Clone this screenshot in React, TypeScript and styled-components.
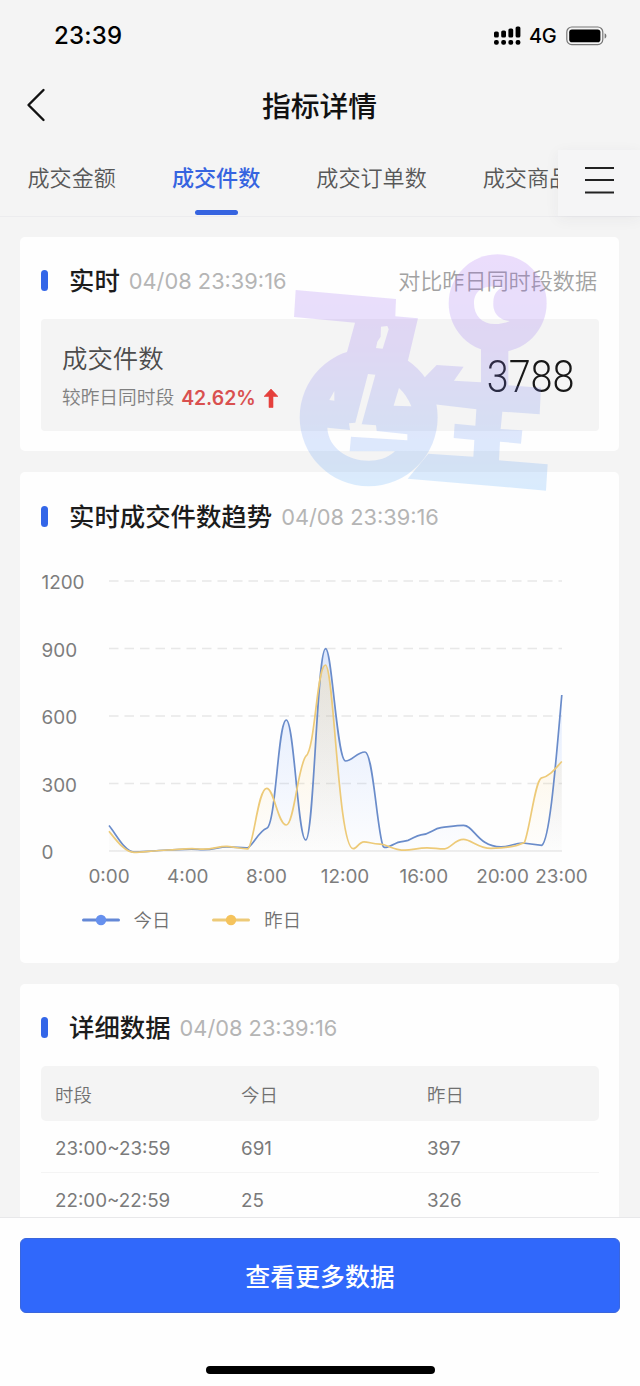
import React from "react";
import styled, { createGlobalStyle } from "styled-components";

const GlobalStyle = createGlobalStyle`
  * { box-sizing: border-box; }
  body {
    margin: 0;
    background: #f4f4f4;
    font-family: Inter, "Noto Sans CJK SC", sans-serif;
    color: #1c1c1c;
  }
`;

const Page = styled.div`
  width: 640px;
  height: 1386px;
  display: flex;
  flex-direction: column;
  overflow: hidden;
  background: #f4f4f4;
`;

const StatusBar = styled.div`
  flex: none;
  height: 71px;
  padding: 0 33px 0 54px;
  display: flex;
  align-items: center;
  justify-content: space-between;
  color: #000;
`;

const Clock = styled.span`
  font-size: 24px;
  font-weight: 550;
  line-height: 30px;
  letter-spacing: 0.2px;
`;

const StatusIcons = styled.div`
  display: flex;
  align-items: center;
`;

const Network = styled.span`
  margin: 0 9px 0 8px;
  width: 28px;
  font-size: 20px;
  line-height: 24px;
  font-weight: 450;
  letter-spacing: -0.3px;
`;

const NavBar = styled.div`
  flex: none;
  height: 71px;
  padding: 0 26px;
  display: grid;
  grid-template-columns: 40px 1fr 40px;
  align-items: center;
  text-align: center;
`;

const BackIcon = styled.svg`
  margin-bottom: 3px;
`;

const NavTitle = styled.h1`
  margin: 1px 1px 0 0;
  font-size: 28.8px;
  line-height: 40px;
  font-weight: 500;
  color: #111;
`;

const TabBar = styled.div`
  flex: none;
  height: 75px;
  display: flex;
  align-items: flex-end;
  border-bottom: 1px solid #ececee;
`;

const TabList = styled.div`
  flex: 1;
  min-width: 0;
  height: 74px;
  padding-left: 27.5px;
  display: flex;
  gap: 56px;
  overflow: hidden;
`;

const Tab = styled.div<{ $active?: boolean }>`
  flex: none;
  display: flex;
  flex-direction: column;
  align-items: center;
  padding-top: 20px;
  font-size: 22.1px;
  line-height: 32px;
  white-space: nowrap;
  font-weight: ${(p) => (p.$active ? 500 : 350)};
  color: ${(p) => (p.$active ? "#3664e0" : "#585858")};
  &::after {
    content: "";
    width: 43px;
    height: 5px;
    margin-top: 16px;
    border-radius: 3px;
    background: ${(p) => (p.$active ? "#3664e0" : "transparent")};
  }
`;

const MenuButton = styled.div`
  flex: none;
  width: 82px;
  height: 66px;
  padding-bottom: 8px;
  display: flex;
  align-items: flex-end;
  justify-content: center;
  padding-bottom: 21px;
  background: #f5f5f6;
  box-shadow: 0 3px 14px rgba(60, 60, 80, 0.055);
`;

const Content = styled.div`
  position: relative;
  flex: 1;
  min-height: 0;
  padding: 20px 21px 0 20px;
  display: flex;
  flex-direction: column;
  gap: 21px;
  overflow: hidden;
`;

const Card = styled.section<{ $height: number }>`
  flex: none;
  height: ${(p) => p.$height}px;
  padding: 0 20px 0 21px;
  border-radius: 5px;
  background: #fefefe;
`;

const CardHeader = styled.div<{ $height: number }>`
  height: ${(p) => p.$height}px;
  padding-top: 6px;
  display: flex;
  align-items: center;
`;

const Marker = styled.i`
  width: 7px;
  height: 21px;
  margin: 0 21px 2px 0;
  border-radius: 4px;
  background: #3366e8;
`;

const CardTitle = styled.h2`
  margin: 0 9px 0 0;
  font-size: 25.4px;
  line-height: 36px;
  font-weight: 500;
  color: #1c1c1c;
`;

const Stamp = styled.span`
  font-size: 21.8px;
  line-height: 30px;
  font-weight: 380;
  color: #b5b5b5;
`;

const Hint = styled.span`
  margin-left: auto;
  padding-right: 2px;
  font-size: 22.1px;
  line-height: 32px;
  font-weight: 350;
  color: #a2a2a2;
`;

const MetricPanel = styled.div`
  height: 112px;
  padding: 5px 24px 0 21px;
  display: flex;
  align-items: center;
  justify-content: space-between;
  border-radius: 4px;
  background: #f4f4f4;
`;

const MetricName = styled.div`
  margin-top: 1px;
  font-size: 25.4px;
  line-height: 40px;
  font-weight: 350;
  color: #4c4c4c;
`;

const MetricCompare = styled.div`
  display: flex;
  align-items: center;
  font-size: 18.7px;
  line-height: 38px;
  font-weight: 350;
  color: #808080;
`;

const Change = styled.b`
  margin: 0 8px 0 7px;
  font-size: 19.4px;
  font-weight: 600;
  color: #d9504f;
`;

const MetricValue = styled.div`
  width: 89px;
  font-family: Roboto, sans-serif;
  font-size: 43.5px;
  line-height: 50px;
  font-weight: 350;
  color: #181818;
  display: flex;
  justify-content: flex-end;
  & > span {
    transform: scaleX(0.91);
    transform-origin: right;
  }
`;

const Watermark = styled.svg`
  position: absolute;
  left: 280px;
  top: 23px;
  opacity: 0.2;
  pointer-events: none;
`;

const ChartSvg = styled.svg`
  display: block;
  margin-left: -1px;
  font-size: 18.9px;
  fill: #7d7d7d;
`;

const Legend = styled.div`
  display: flex;
  gap: 42px;
  padding: 10px 0 0 40.5px;
`;

const LegendItem = styled.div`
  display: flex;
  align-items: center;
  gap: 14px;
  font-size: 18.4px;
  line-height: 28px;
  font-weight: 350;
  color: #707070;
`;

const Row = styled.div<{ $head?: boolean }>`
  height: ${(p) => (p.$head ? 55 : 52)}px;
  padding: ${(p) => (p.$head ? 0 : 4)}px 0 0 14px;
  display: grid;
  grid-template-columns: 186px 186px 1fr;
  align-items: center;
  font-size: ${(p) => (p.$head ? 18.4 : 18.8)}px;
  font-weight: ${(p) => (p.$head ? 350 : 400)};
  color: ${(p) => (p.$head ? "#707070" : "#7a7a7a")};
  background: ${(p) => (p.$head ? "#f4f4f4" : "transparent")};
  border-radius: ${(p) => (p.$head ? "5px" : "0")};
  border-bottom: ${(p) => (p.$head ? "none" : "1px solid #f4f4f4")};
`;

const Footer = styled.div`
  flex: none;
  height: 169px;
  padding: 20px 20px 12px;
  display: flex;
  flex-direction: column;
  align-items: center;
  justify-content: space-between;
  border-top: 1px solid #e8e8ea;
  background: #fefefe;
`;

const MoreButton = styled.button`
  width: 600px;
  height: 75px;
  padding: 0 0 2px;
  border: 1px solid #3a66dc;
  border-radius: 6px;
  background: #3068fb;
  color: #fff;
  font-family: inherit;
  font-size: 24.9px;
  font-weight: 500;
`;

const HomeIndicator = styled.div`
  width: 229px;
  height: 8px;
  border-radius: 4px;
  background: #000;
`;

const TODAY =
  "M109 825.5C116 834 125 852 134 852.2C142 852.2 152 850.6 168 850C180 849.6 190 848.6 198 849.4C212 851 218 846.6 227 846.8C236 847 241 848 248 847.8C254 844 259 831 266.7 828.3C276 825 278 720 286.3 720C294 720 298 840 305.7 840C314 840 317 648.7 325.6 648.7C332 648.7 337 761 345.5 761C352 761 357 752 365 752C373 752 377 830 383 846C384 850 393 844.5 398 842.4C402 841 404 841.6 408 840.4C413 838.6 416 835.4 421 834.8C431 834 433 828.6 441 827.6C448 827 456 825.4 463.5 825.4C474 825.4 478 846.9 501 846.9C510 846.9 514 843 523 843L541.8 845.4C550 840 556 760 561.8 695";

const YESTERDAY =
  "M109 831.3C116 840 125 852.4 134 852.4C142 852.4 152 850.8 168 850C180 849.4 190 848 198 849C212 850.4 218 846 227 846.4C236 847 241 849 248 848.8C254 844 258 788.3 266.7 788.3C274 788.3 278 825 286.3 825C294 825 298 765 306 756C315 750 317 665 325.4 665C334 665 338 848.7 353.3 848.7C357 848.7 359 841.8 364 841.8C369 841.8 372 844.2 380 844.2C388 844.2 392 850.2 405 850.2C412 850.2 418 847.8 427 847.8C434 847.8 438 849 444.5 848.9C451 848 455 839.3 463.5 839.3C471 839.3 478 848.3 491 848.3C504 848.3 515 847 524.5 842.4C530 828 535 782 541 778.2C550 776 555 769 561.8 761.5";

const GRID = [
  { y: 581, label: "1200" },
  { y: 648.5, label: "900" },
  { y: 716, label: "600" },
  { y: 783.5, label: "300" },
  { y: 851, label: "0" },
];

const HOURS = [
  { x: 109, label: "0:00" },
  { x: 187.8, label: "4:00" },
  { x: 266.5, label: "8:00" },
  { x: 345, label: "12:00" },
  { x: 423.8, label: "16:00" },
  { x: 502.5, label: "20:00" },
  { x: 561.5, label: "23:00" },
];

const ROWS = [
  ["23:00~23:59", "691", "397"],
  ["22:00~22:59", "25", "326"],
];

function SignalIcon() {
  const tops = [5.5, 4.5, 2.5, 0.5];
  return (
    <svg width="28" height="20" viewBox="0 0 28 20">
      {tops.map((top, i) => (
        <g key={top}>
          <rect x={1 + i * 7.2} y={top} width="4.8" height={11.5 - top} rx="1.6" />
          <rect x={1 + i * 7.2} y="14" width="4.8" height="4.8" rx="2" />
        </g>
      ))}
    </svg>
  );
}

function BatteryIcon() {
  return (
    <svg width="41" height="20" viewBox="0 0 41 20">
      <rect x="0.8" y="1" width="36" height="17.6" rx="5" fill="none" stroke="#777" strokeWidth="1.2" />
      <rect x="3.2" y="3.4" width="31.2" height="12.8" rx="2.8" />
      <path d="M38.6 7.2c2.4 1 2.4 4.4 0 5.4z" fill="#777" />
    </svg>
  );
}

function TrendChart() {
  return (
    <ChartSvg width="560" height="340" viewBox="40 556 560 340">
      <defs>
        <linearGradient id="todayFill" gradientUnits="userSpaceOnUse" x1="0" y1="648" x2="0" y2="851">
          <stop offset="0" stopColor="#5b8ff9" stopOpacity="0.2" />
          <stop offset="1" stopColor="#5b8ff9" stopOpacity="0.01" />
        </linearGradient>
        <linearGradient id="yesterdayFill" gradientUnits="userSpaceOnUse" x1="0" y1="665" x2="0" y2="851">
          <stop offset="0" stopColor="#f6c45a" stopOpacity="0.22" />
          <stop offset="1" stopColor="#f6c45a" stopOpacity="0.01" />
        </linearGradient>
      </defs>
      {GRID.map((g) => (
        <g key={g.label}>
          <text x="41.5" y={g.y + 8}>{g.label}</text>
          <line
            x1="109"
            x2="562"
            y1={g.y}
            y2={g.y}
            stroke="#e8e8e8"
            strokeWidth="1.4"
            strokeDasharray={g.label === "0" ? undefined : "9.5 6"}
          />
        </g>
      ))}
      <path d={`${TODAY}V851H109Z`} fill="url(#todayFill)" />
      <path d={`${YESTERDAY}V851H109Z`} fill="url(#yesterdayFill)" />
      <path d={TODAY} fill="none" stroke="#6a8cca" strokeWidth="1.7" />
      <path d={YESTERDAY} fill="none" stroke="#edca78" strokeWidth="1.7" />
      {HOURS.map((h) => (
        <text key={h.label} x={h.x} y="883.4" textAnchor="middle">{h.label}</text>
      ))}
    </ChartSvg>
  );
}

function LegendMark({ line, dot }: { line: string; dot: string }) {
  return (
    <svg width="38" height="12" viewBox="0 0 38 12">
      <path d="M1.5 6h35" stroke={line} strokeWidth="3" strokeLinecap="round" />
      <circle cx="19" cy="6" r="5.2" fill={dot} />
    </svg>
  );
}

function WatermarkMark() {
  return (
    <Watermark width="340" height="260" viewBox="0 0 1020 780">
      <defs>
        <linearGradient id="markFill" gradientUnits="userSpaceOnUse" x1="0" y1="40" x2="0" y2="750">
          <stop offset="0" stopColor="#a35cf5" />
          <stop offset="0.4" stopColor="#8c68f2" />
          <stop offset="0.65" stopColor="#6e86f2" />
          <stop offset="1" stopColor="#4aa5fa" />
        </linearGradient>
        <mask id="markShape" maskUnits="userSpaceOnUse" x="0" y="0" width="1020" height="780">
          <g fill="#fff">
            <circle cx="266" cy="532" r="207" />
            <circle cx="653" cy="190" r="147" />
            <path d="M47 150L348 177L346 229L414 235L383 365L340 400H190L200 340L225 248L42 231Z" />
            <path d="M430 416L470 375L551 380L522 422L603 427V325H685V436L783 443L779 523L667 515L662 567L727 571L723 611L660 605L657 661L803 673L798 752L383 716L445 641L580 650L583 600L521 594L524 551L586 557L589 508L462 493Z" />
          </g>
          <g fill="#000">
            <path d="M303 260L322 258L326 268L308 326L288 324L292 305L302 290Z" />
            <path d="M142 563L210 570L207 550L226 548L264 402L286 404L245 553L288 556L290 573L382 583V601L213 590L209 634H345C320 656 295 662 266 662C205 662 145 625 142 563Z" />
            <path d="M163 453L148 480L163 482Z" />
            <path d="M357 444L341 497L394 499Q380 465 357 444Z" />
            <path d="M668 142C600 130 582 160 582 190C582 240 625 268 690 243C650 240 638 210 640 188C640 165 650 150 668 142Z" />
          </g>
        </mask>
      </defs>
      <rect width="1020" height="780" fill="url(#markFill)" mask="url(#markShape)" />
    </Watermark>
  );
}

function Header({ title, height, hint }: { title: string; height: number; hint?: string }) {
  return (
    <CardHeader $height={height}>
      <Marker />
      <CardTitle>{title}</CardTitle>
      <Stamp>04/08 23:39:16</Stamp>
      {hint && <Hint>{hint}</Hint>}
    </CardHeader>
  );
}

export default function App() {
  return (
    <Page>
      <GlobalStyle />
      <StatusBar>
        <Clock>23:39</Clock>
        <StatusIcons>
          <SignalIcon />
          <Network>4G</Network>
          <BatteryIcon />
        </StatusIcons>
      </StatusBar>
      <NavBar>
        <BackIcon width="20" height="34" viewBox="0 0 20 34">
          <path d="M17.5 2L2.5 17L17.5 32" fill="none" stroke="#111" strokeWidth="2.4" strokeLinecap="round" strokeLinejoin="round" />
        </BackIcon>
        <NavTitle>指标详情</NavTitle>
      </NavBar>
      <TabBar>
        <TabList>
          <Tab>成交金额</Tab>
          <Tab $active>成交件数</Tab>
          <Tab>成交订单数</Tab>
          <Tab>成交商品数</Tab>
        </TabList>
        <MenuButton>
          <svg width="30" height="30" viewBox="0 0 30 30">
            <path d="M1 3h29M1 15h29M1 27.5h29" stroke="#222" strokeWidth="2.2" />
          </svg>
        </MenuButton>
      </TabBar>
      <Content>
        <Card $height={214}>
          <Header title="实时" height={82} hint="对比昨日同时段数据" />
          <MetricPanel>
            <div>
              <MetricName>成交件数</MetricName>
              <MetricCompare>
                较昨日同时段<Change>42.62%</Change>
                <svg width="14" height="19" viewBox="0 0 14 19">
                  <path d="M7 0L14 7.5H9V18.5H5V7.5H0Z" fill="#e5403c" stroke="#e5403c" strokeWidth="0.6" />
                </svg>
              </MetricCompare>
            </div>
            <MetricValue><span>3788</span></MetricValue>
          </MetricPanel>
        </Card>
        <Card $height={491}>
          <Header title="实时成交件数趋势" height={84} />
          <TrendChart />
          <Legend>
            <LegendItem>
              <LegendMark line="#6488d6" dot="#6690ee" />
              今日
            </LegendItem>
            <LegendItem>
              <LegendMark line="#edca78" dot="#f5c35c" />
              昨日
            </LegendItem>
          </Legend>
        </Card>
        <Card $height={300}>
          <Header title="详细数据" height={82} />
          <Row $head>
            <span>时段</span>
            <span>今日</span>
            <span>昨日</span>
          </Row>
          {ROWS.map((row) => (
            <Row key={row[0]}>
              {row.map((cell) => (
                <span key={cell}>{cell}</span>
              ))}
            </Row>
          ))}
        </Card>
        <WatermarkMark />
      </Content>
      <Footer>
        <MoreButton>查看更多数据</MoreButton>
        <HomeIndicator />
      </Footer>
    </Page>
  );
}
